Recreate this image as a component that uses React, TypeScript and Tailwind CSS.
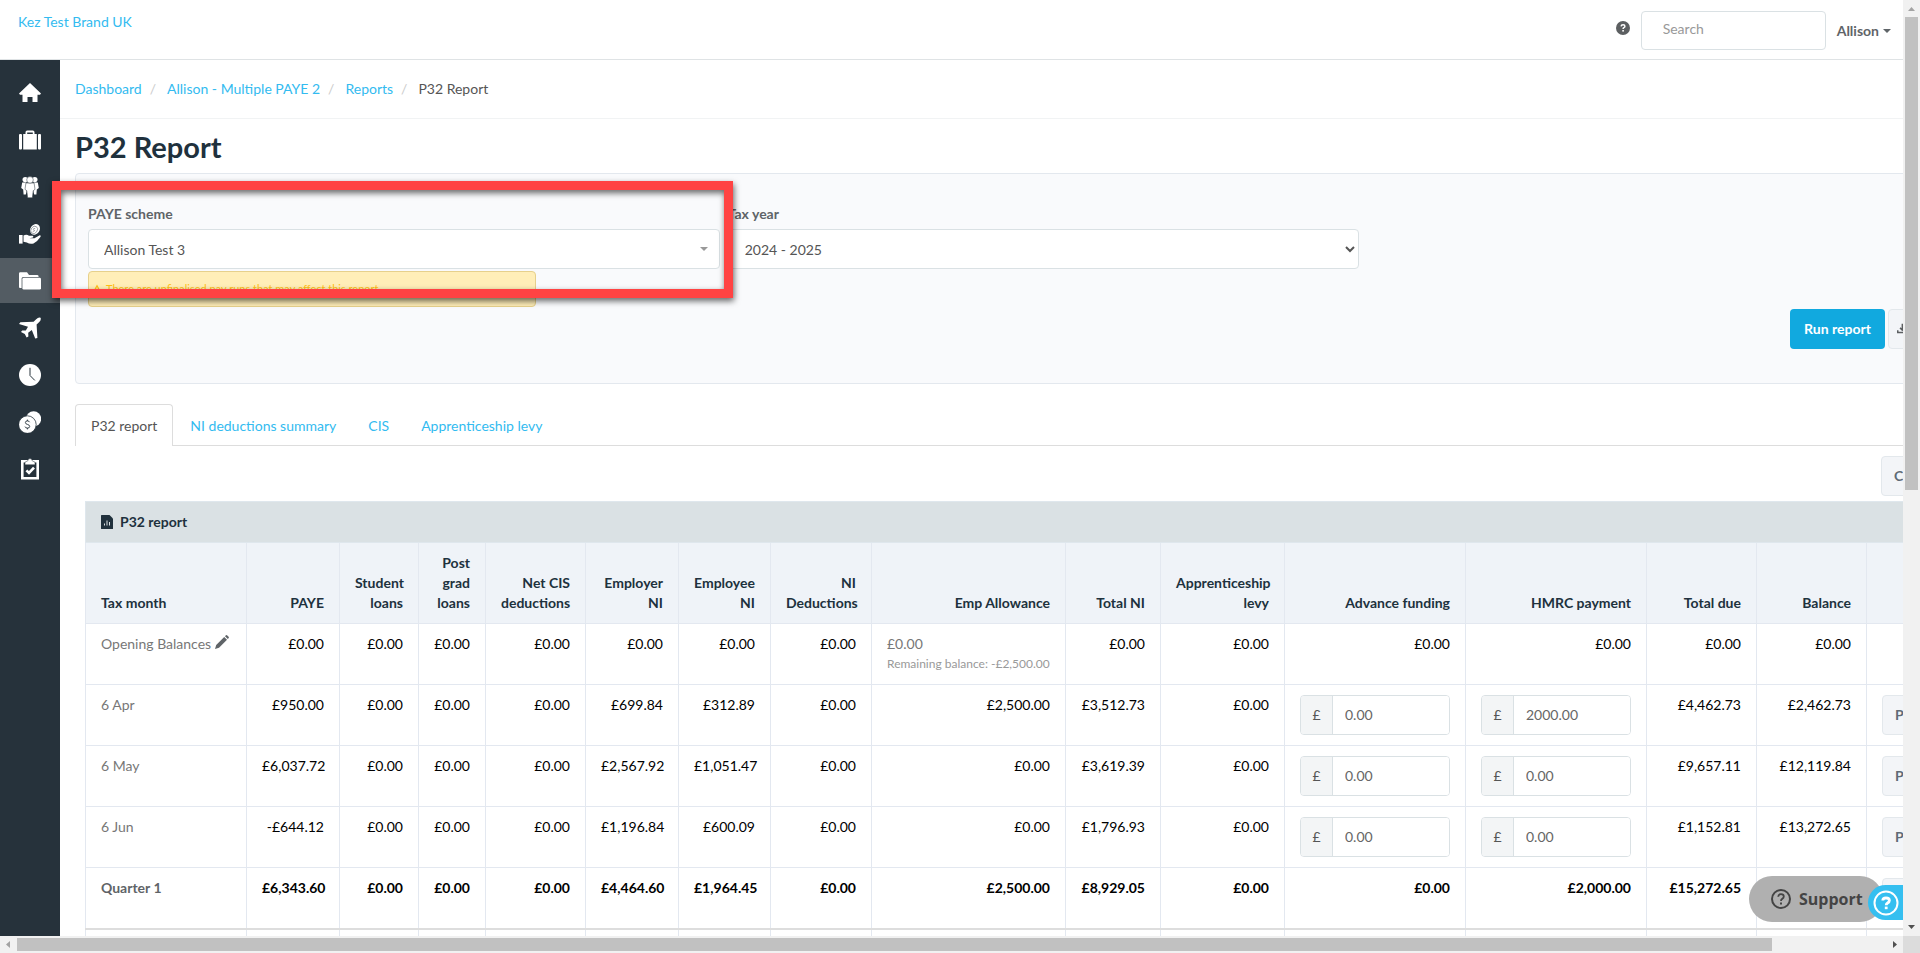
import React from "react";

const money = (advance: string, hmrc: string) => ({ advance, hmrc });

type Row = {
  label: string;
  values: string[];
  inputs?: { advance: string; hmrc: string };
  opening?: boolean;
  total?: boolean;
};

const columns: { title: string; width: string }[] = [
  { title: "Tax month", width: "w-[161px]" },
  { title: "PAYE", width: "w-[93px]" },
  { title: "Student loans", width: "w-[79px]" },
  { title: "Post grad loans", width: "w-[67px]" },
  { title: "Net CIS deductions", width: "w-[100px]" },
  { title: "Employer NI", width: "w-[93px]" },
  { title: "Employee NI", width: "w-[92px]" },
  { title: "NI Deductions", width: "w-[101px]" },
  { title: "Emp Allowance", width: "w-[194px]" },
  { title: "Total NI", width: "w-[95px]" },
  { title: "Apprenticeship levy", width: "w-[124px]" },
  { title: "Advance funding", width: "w-[181px]" },
  { title: "HMRC payment", width: "w-[181px]" },
  { title: "Total due", width: "w-[110px]" },
  { title: "Balance", width: "w-[110px]" },
  { title: "", width: "w-[135px]" },
];

const rows: Row[] = [
  {
    label: "Opening Balances",
    opening: true,
    values: ["£0.00", "£0.00", "£0.00", "£0.00", "£0.00", "£0.00", "£0.00", "£0.00", "£0.00", "£0.00", "£0.00", "£0.00", "£0.00", "£0.00"],
  },
  {
    label: "6 Apr",
    inputs: money("0.00", "2000.00"),
    values: ["£950.00", "£0.00", "£0.00", "£0.00", "£699.84", "£312.89", "£0.00", "£2,500.00", "£3,512.73", "£0.00", "", "", "£4,462.73", "£2,462.73"],
  },
  {
    label: "6 May",
    inputs: money("0.00", "0.00"),
    values: ["£6,037.72", "£0.00", "£0.00", "£0.00", "£2,567.92", "£1,051.47", "£0.00", "£0.00", "£3,619.39", "£0.00", "", "", "£9,657.11", "£12,119.84"],
  },
  {
    label: "6 Jun",
    inputs: money("0.00", "0.00"),
    values: ["-£644.12", "£0.00", "£0.00", "£0.00", "£1,196.84", "£600.09", "£0.00", "£0.00", "£1,796.93", "£0.00", "", "", "£1,152.81", "£13,272.65"],
  },
  {
    label: "Quarter 1",
    total: true,
    values: ["£6,343.60", "£0.00", "£0.00", "£0.00", "£4,464.60", "£1,964.45", "£0.00", "£2,500.00", "£8,929.05", "£0.00", "£0.00", "£2,000.00", "£15,272.65", ""],
  },
];

const navItems: { name: string; icon: React.ReactNode; active?: boolean }[] = [
  {
    name: "Home",
    icon: <path d="M11 1 L22 11.5 L21 12.8 H18.5 V20 H13.5 V15 H8.5 V20 H3.5 V12.8 H1 L0 11.5 Z" />,
  },
  {
    name: "Business",
    icon: (
      <>
        <rect x="0" y="5" width="3" height="15.5" rx="1" />
        <rect x="4.2" y="5" width="13.6" height="15.5" />
        <rect x="19" y="5" width="3" height="15.5" rx="1" />
        <path d="M6.5 5.5 V3.2 Q6.5 1.5 8.2 1.5 H13.8 Q15.5 1.5 15.5 3.2 V5.5 H13.8 V3.4 H8.2 V5.5 Z" />
      </>
    ),
  },
  {
    name: "Employees",
    icon: (
      <>
        <circle cx="6.2" cy="3.6" r="2.7" />
        <circle cx="15.8" cy="3.6" r="2.7" />
        <path d="M3.2 6.4 H7.5 L7.5 16 L6.8 18.5 H4.6 L4.2 13.6 L2.2 12 Z" />
        <path d="M18.8 6.4 H14.5 L14.5 16 L15.2 18.5 H17.4 L17.8 13.6 L19.8 12 Z" />
        <g stroke="#26323b" strokeWidth="0.5">
          <path d="M6.9 7 H15.1 L16 13.4 L14.2 14.7 L13.4 21.8 H8.6 L7.8 14.7 L6 13.4 Z" />
          <circle cx="11" cy="3.9" r="3.3" />
        </g>
      </>
    ),
  },
  {
    name: "Pay runs",
    icon: (
      <>
        <rect x="0" y="12" width="3.6" height="8.6" />
        <path d="M4.5 12.6 Q7.5 11 10 12.8 H13.6 Q15 13.2 14 14.6 L10.5 15.2 L15.5 15.2 L20.3 12.4 Q22 12 21.6 13.8 Q18.5 18.5 14.5 20.5 Q11 21.5 7.8 19.6 L4.5 18.8 Z" />
        <ellipse cx="16" cy="6.4" rx="4.6" ry="5.6" transform="rotate(35 16 6.4)" />
        <g fill="none" stroke="#26323b" strokeWidth="0.4">
          <ellipse cx="15.2" cy="6.9" rx="3.1" ry="3.9" transform="rotate(35 15.2 6.9)" />
          <path d="M16.2 5.6 Q14.4 4.9 14.2 6.2 Q14.5 7 15.4 7.2 Q16 8.4 13.8 8.4" />
        </g>
      </>
    ),
  },
  {
    name: "Reports",
    active: true,
    icon: (
      <>
        <path d="M0 3.5 Q0 2.2 1.2 2.2 H8 L10 5 H18 Q19.6 5 19.6 6.4 V7 H4.2 Q2.6 7 2.6 8.6 V18 H1 Q0 18 0 17 Z" />
        <rect x="3.4" y="7.8" width="18.6" height="11.8" rx="1.4" />
      </>
    ),
  },
  {
    name: "Leave",
    icon: (
      <path d="M21.6 0.8 Q22.4 3 20 5.2 L17.6 7.6 L18.4 21 L16.2 21.6 L12.8 13 L9.2 15.8 L9.4 19.4 L7.6 20.6 L5.8 17 L2 15 L3.2 13.4 L6.8 13.4 L9 9.8 L0 7 L1.4 5.2 L14.6 4.8 L17.2 2.2 Q19.4 0 21.6 0.8 Z" />
    ),
  },
  {
    name: "Timesheets",
    icon: (
      <>
        <circle cx="11" cy="11" r="11" />
        <path d="M11 3.8 V11.5 L15.8 16.4" fill="none" stroke="#26323b" strokeWidth="1" />
      </>
    ),
  },
  {
    name: "Expenses",
    icon: (
      <>
        <circle cx="14.6" cy="7.8" r="7.6" />
        <circle cx="8.4" cy="13.6" r="8.8" stroke="#26323b" strokeWidth="0.8" />
        <path
          d="M10.6 11.2 Q10.2 9.9 8.4 9.9 Q6.4 9.9 6.4 11.5 Q6.4 13 8.4 13.4 Q10.7 13.9 10.7 15.5 Q10.7 17.1 8.4 17.1 Q6.4 17.1 6 15.6 M8.4 8.6 V10 M8.4 17 V18.4"
          fill="none"
          stroke="#26323b"
          strokeWidth="0.9"
        />
      </>
    ),
  },
  {
    name: "Tasks",
    icon: (
      <>
        <path fillRule="evenodd" d="M2 2 H20 V21.4 H2 Z M4.6 4.4 V19 H17.4 V4.4 Z" />
        <path d="M6 6.8 V4.2 L8.8 2.8 Q9 0.6 11 0.6 Q13 0.6 13.2 2.8 L16 4.2 V6.8 Z" stroke="#26323b" strokeWidth="0.5" />
        <path d="M7.4 12.4 L10 15 L15 9.6" fill="none" stroke="#fff" strokeWidth="2.6" />
      </>
    ),
  },
];

const linkStyle = "text-[#33bbf0]";
const neutralButton = "h-10 shrink-0 rounded border border-[#e3e8ec] bg-[#f3f5f8] font-bold whitespace-nowrap text-[#5f6b76]";

function Sidebar() {
  return (
    <nav aria-label="Main" className="w-[60px] shrink-0 bg-[#26323b] pt-[10px]">
      <ul className="flex flex-col gap-0.5">
        {navItems.map((item) => (
          <li key={item.name}>
            <a
              href="#"
              aria-label={item.name}
              className={
                item.active
                  ? "flex h-[45px] items-center justify-center bg-[#535c63]"
                  : "flex h-[45px] items-center justify-center"
              }
            >
              <svg viewBox="0 0 22 22" className="size-[22px] fill-white">
                {item.icon}
              </svg>
            </a>
          </li>
        ))}
      </ul>
    </nav>
  );
}

function Header() {
  return (
    <header className="flex h-[60px] shrink-0 items-start justify-between border-b border-[#dfe3e5] pt-[11px] pr-3 pl-[18px]">
      <a href="#" className="pt-px text-[#33bbf0]">
        Kez Test Brand UK
      </a>
      <div className="flex h-[39px] items-center">
        <a href="#" aria-label="Help" className="mr-[11px] pb-[5px]">
          <svg viewBox="0 0 14 14" className="size-[14px]">
            <circle cx="7" cy="7" r="7" fill="#5c5f61" />
            <path d="M5.1 5.4 Q5.2 3.7 7.1 3.7 Q8.9 3.7 8.9 5.2 Q8.9 6.1 7.9 6.6 Q7.1 7 7.1 8" fill="none" stroke="#fff" strokeWidth="1.5" />
            <rect x="6.3" y="9" width="1.6" height="1.6" fill="#fff" />
          </svg>
        </a>
        <input
          aria-label="Search"
          placeholder="Search"
          className="h-[39px] w-[185px] rounded border border-[#dae1e4] bg-white px-[21px] pb-1 placeholder:text-[#999]"
        />
        <button className="ml-[11px] flex items-center gap-1 font-bold text-[#5f6468]">
          Allison
          <svg viewBox="0 0 8 4" className="h-1 w-2 fill-[#5f6468]">
            <path d="M0 0 H8 L4 4 Z" />
          </svg>
        </button>
      </div>
    </header>
  );
}

function Breadcrumbs() {
  const separator = <span className="px-2 text-[#ccc]">/</span>;
  return (
    <nav aria-label="Breadcrumb" className="border-b border-[#f1f3f4] px-[15px] py-[19px]">
      <ol className="flex gap-[3px]">
        <li>
          <a href="#" className={linkStyle}>Dashboard</a>
          {separator}
        </li>
        <li>
          <a href="#" className={linkStyle}>Allison - Multiple PAYE 2</a>
          {separator}
        </li>
        <li>
          <a href="#" className={linkStyle}>Reports</a>
          {separator}
        </li>
        <li className="text-[#555]">P32 Report</li>
      </ol>
    </nav>
  );
}

function Filters() {
  return (
    <section className="rounded border border-[#e3e8ee] bg-[#f9fafc] p-3 pb-[34px]">
      <div className="grid grid-cols-3 items-start gap-2">
        <div>
          <label htmlFor="scheme" className="block pt-[18px] pb-[5px] font-bold text-[#5f6468]">
            PAYE scheme
          </label>
          <div className="relative">
            <select
              id="scheme"
              className="block h-10 w-full appearance-none rounded border border-[#dae1e4] bg-white px-[15px] pt-0.5 text-[#555]"
            >
              <option>Allison Test 3</option>
            </select>
            <svg viewBox="0 0 8 4" className="absolute top-[18px] right-3 h-1 w-2 fill-[#999]">
              <path d="M0 0 H8 L4 4 Z" />
            </svg>
          </div>
          <p className="mt-0.5 flex h-9 w-[448px] items-center gap-1 rounded border border-[#e6d08c] bg-[#ffeeb8] px-[3px] text-[11px] text-[#ffbf14]">
            <svg viewBox="0 0 10 10" className="size-[10px] fill-[#ffbf14]">
              <path fillRule="evenodd" d="M5 0.4 L10 9.6 H0 Z M4.4 3.6 V6.6 H5.6 V3.6 Z M4.4 7.4 V8.5 H5.6 V7.4 Z" />
            </svg>
            There are unfinalised pay runs that may affect this report.
          </p>
        </div>
        <div>
          <label htmlFor="year" className="block pt-[18px] pb-[5px] font-bold text-[#5f6468]">
            Tax year
          </label>
          <select id="year" className="block h-10 w-full rounded border border-[#dae1e4] bg-white px-3 text-[#555]">
            <option>2024 - 2025</option>
          </select>
        </div>
      </div>
      <div className="mt-0.5 flex justify-end gap-[3px]">
        <button className="h-10 w-[95px] rounded bg-[#11a9df] font-bold text-white">Run report</button>
        <button className={neutralButton + " flex w-[111px] items-center gap-[6px] px-2"}>
          <svg viewBox="0 0 14 14" className="size-[14px] fill-none stroke-[#5c5f61] stroke-2">
            <path d="M7 0 V8 M4 5.5 L7 8.5 L10 5.5 M1 8.5 V11.5 H13 V8.5" />
          </svg>
          Download
          <svg viewBox="0 0 8 4" className="h-1 w-2 fill-[#5f6468]">
            <path d="M0 0 H8 L4 4 Z" />
          </svg>
        </button>
      </div>
    </section>
  );
}

function Tabs() {
  const tabs = ["NI deductions summary", "CIS", "Apprenticeship levy"];
  return (
    <div role="tablist" className="mt-5 flex gap-0.5 border-b border-[#ddd]">
      <button role="tab" aria-selected="true" className="-mb-px h-[42px] rounded-t border border-b-0 border-[#ddd] bg-white px-[15px] text-[#555]">
        P32 report
      </button>
      {tabs.map((tab) => (
        <button key={tab} role="tab" aria-selected="false" className="h-[41px] px-[15px] pt-0.5 text-[#33bbf0]">
          {tab}
        </button>
      ))}
    </div>
  );
}

function MoneyInput({ label, value }: { label: string; value: string }) {
  return (
    <div className="flex h-10 overflow-hidden rounded border border-[#dae1e4]">
      <span className="flex w-8 shrink-0 items-center justify-center border-r border-[#dae1e4] bg-[#f3f5f6] text-[#555]">£</span>
      <input aria-label={label} defaultValue={value} className="w-full min-w-0 bg-white px-3 text-[#666]" />
    </div>
  );
}

function ReportTable() {
  return (
    <div className="mt-[5px] px-[10px]">
      <table className="w-full table-fixed border-collapse">
        <colgroup>
          {columns.map((column, index) => (
            <col key={index} className={column.width} />
          ))}
        </colgroup>
        <thead className="text-[#20313d]">
          <tr>
            <th colSpan={16} className="border border-[#dfe7ed] bg-[#dae1e4] px-[15px] py-[10px] text-left font-bold">
              <span className="flex items-center gap-[7px]">
                <svg viewBox="0 0 12 14" className="h-[14px] w-3">
                  <path d="M0.5 0 H8.5 L12 3.5 V13.5 Q12 14 11.5 14 H0.5 Q0 14 0 13.5 V0.5 Q0 0 0.5 0 Z" fill="#20313d" />
                  <path d="M3.5 8.5 V10.5 M6 5.5 V10.5 M8.5 7 V10.5" stroke="#dae1e4" strokeWidth="1" />
                </svg>
                P32 report
              </span>
            </th>
          </tr>
          <tr>
            {columns.map((column, index) => (
              <th
                key={index}
                className="border border-[#e3e8f0] bg-[#eff3f8] px-[15px] py-[10px] text-right align-bottom font-bold first:text-left"
              >
                {column.title}
              </th>
            ))}
          </tr>
        </thead>
        <tbody>
          {rows.map((row) => (
            <tr
              key={row.label}
              className={row.total ? "h-[61px] border-b-2 border-[#ddd] align-top font-bold text-black" : "h-[61px] align-top text-black"}
            >
              <th
                scope="row"
                className={
                  row.total
                    ? "border-x border-t border-[#e3e8f0] py-[10px] pl-[15px] text-left font-bold text-[#5f6468]"
                    : "border border-[#e3e8f0] py-[10px] pl-[15px] text-left font-normal whitespace-nowrap text-[#777]"
                }
              >
                {row.label}
                {row.opening && (
                  <svg aria-label="Edit" viewBox="0 0 14 14" className="ml-1 inline size-[14px] fill-[#5f6468] align-baseline">
                    <path d="M0 14 L1.2 10 L9.2 2 L12 4.8 L4 12.8 Z M10 1.2 L10.9 0.3 Q11.6 -0.2 12.3 0.4 L13.6 1.7 Q14.2 2.4 13.7 3.1 L12.8 4 Z" />
                  </svg>
                )}
              </th>
              {row.values.map((value, index) => (
                <td
                  key={index}
                  className={
                    row.total
                      ? "border-x border-t border-[#e3e8f0] px-[15px] py-[10px] text-right"
                      : "border border-[#e3e8f0] px-[15px] py-[10px] text-right"
                  }
                >
                  {row.opening && index === 7 ? (
                    <div className="text-left whitespace-nowrap text-[#777]">
                      {value}
                      <small className="block text-[12px] leading-5 text-[#999]">Remaining balance: -£2,500.00</small>
                    </div>
                  ) : row.inputs && index === 10 ? (
                    <MoneyInput label={row.label + " advance funding"} value={row.inputs.advance} />
                  ) : row.inputs && index === 11 ? (
                    <MoneyInput label={row.label + " HMRC payment"} value={row.inputs.hmrc} />
                  ) : (
                    value
                  )}
                </td>
              ))}
              <td
                className={
                  row.total
                    ? "border-x border-t border-[#e3e8f0] px-[15px] py-[10px]"
                    : "border border-[#e3e8f0] px-[15px] py-[10px]"
                }
              >
                {!row.opening && <button className={neutralButton + " px-3"}>P32 report</button>}
              </td>
            </tr>
          ))}
          <tr className="h-[61px]">
            {columns.map((_, index) => (
              <td key={index} className="border-x border-[#e3e8f0]" />
            ))}
          </tr>
        </tbody>
      </table>
    </div>
  );
}

function FloatingHelp() {
  return (
    <>
      <button className="absolute right-5 bottom-[14px] flex h-[46px] w-[134px] items-center gap-2 rounded-full bg-[#b0b0b0] pl-[22px] font-['Open_Sans',sans-serif] text-[16px] font-bold text-[#444]">
        <svg viewBox="0 0 20 20" className="size-5 shrink-0 fill-none stroke-[#444] stroke-2">
          <circle cx="10" cy="10" r="9" />
          <path d="M7.2 7.8 Q7.3 5.2 10 5.2 Q12.8 5.2 12.8 7.6 Q12.8 9 11.2 9.9 Q10 10.6 10 12" strokeWidth="1.8" />
          <path d="M10 13.6 V15.4" />
        </svg>
        Support
      </button>
      <button aria-label="Help centre" className="absolute right-0 bottom-4 flex h-[35px] w-[35px] items-center rounded-l-full bg-[#35bff0] pl-[5px]">
        <svg viewBox="0 0 26 26" className="size-[26px] shrink-0 fill-none stroke-white">
          <circle cx="13" cy="13" r="11.5" strokeWidth="2" />
          <path d="M9.8 10.6 Q9.8 8 13 8 Q16.4 8 16.4 10.6 Q16.4 12 14.6 13 Q13.2 13.8 13.2 15.2" strokeWidth="2.8" />
          <path d="M13.2 16.6 V19.2" strokeWidth="2.8" />
        </svg>
      </button>
    </>
  );
}

export default function App() {
  return (
    <div className="grid h-screen grid-cols-[minmax(0,1fr)_17px] grid-rows-[minmax(0,1fr)_17px] bg-white font-[Lato,sans-serif] text-[14px] leading-5">
      <div className="relative flex flex-col overflow-hidden">
        <Header />
        <div className="flex min-h-0 flex-1">
          <Sidebar />
          <main className="min-w-0 flex-1 overflow-hidden">
            <div className="min-w-[1967px]">
              <Breadcrumbs />
              <div className="px-[15px]">
                <h1 className="pt-[11px] pb-[9px] text-[29px] leading-[34px] font-bold text-[#20313d]">P32 Report</h1>
                <Filters />
                <Tabs />
                <div className="mt-[10px] flex justify-end pr-[10px]">
                  <button className={neutralButton + " w-[121px] px-3 text-left"}>Column layout</button>
                </div>
                <ReportTable />
              </div>
            </div>
          </main>
        </div>
        <div className="pointer-events-none absolute top-[181px] left-[52px] h-[117px] w-[681px] border-9 border-[#ff4343] drop-shadow-[1px_3px_3px_rgba(0,0,0,0.6)]" />
        <FloatingHelp />
      </div>
      <div aria-hidden="true" className="flex flex-col items-center justify-between bg-[#f1f1f1]">
        <svg viewBox="0 0 17 17" className="size-[17px] fill-[#a3a3a3]">
          <path d="M5 11 H12 L8.500 7 Z" />
        </svg>
        <div className="flex w-[13px] flex-1 flex-col">
          <div className="h-[52.4%] bg-[#c1c1c1]" />
        </div>
        <svg viewBox="0 0 17 17" className="size-[17px] fill-[#505050]">
          <path d="M5 6 H12 L8.500 10 Z" />
        </svg>
      </div>
      <div aria-hidden="true" className="flex items-center bg-[#f1f1f1]">
        <svg viewBox="0 0 17 17" className="size-[17px] fill-[#a3a3a3]">
          <path d="M10 5 V12 L6 8.500 Z" />
        </svg>
        <div className="flex h-[13px] flex-1">
          <div className="w-[93.9%] bg-[#c1c1c1]" />
        </div>
        <svg viewBox="0 0 17 17" className="size-[17px] fill-[#505050]">
          <path d="M7 5 V12 L11 8.500 Z" />
        </svg>
      </div>
      <div className="bg-[#dcdcdc]" />
    </div>
  );
}
